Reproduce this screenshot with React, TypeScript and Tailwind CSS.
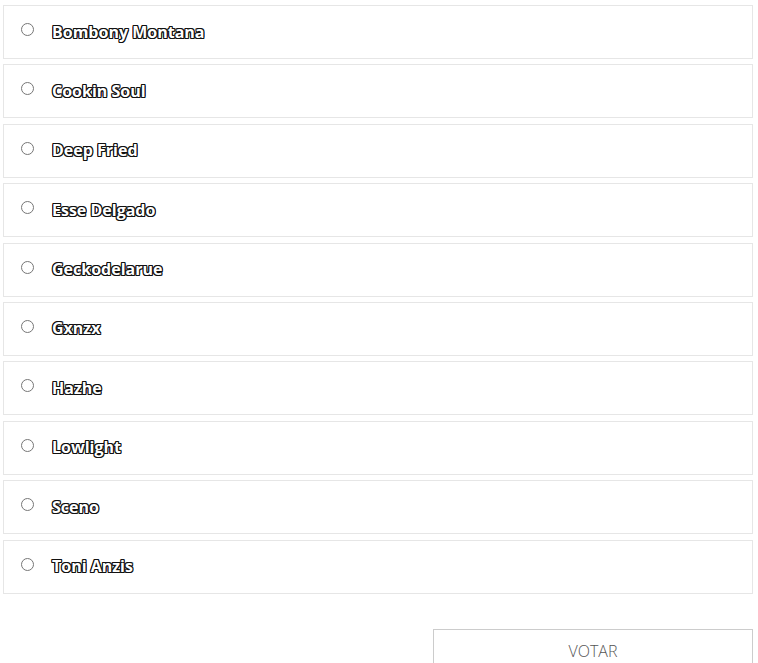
import React from 'react';

const options = [
    'Bombony Montana',
    'Cookin Soul',
    'Deep Fried',
    'Esse Delgado',
    'Geckodelarue',
    'Gxnzx',
    'Hazhe',
    'Lowlight',
    'Sceno',
    'Toni Anzis',
];

export default function App() {
    return (
        <div className="bg-white min-h-[663px] pl-[3px] pt-[5px] font-['Open_Sans',sans-serif]">
            <div className="w-[750px] flex flex-col gap-[5.4px]">
                {options.map((name) => (
                    <label
                        key={name}
                        className="h-[54px] border border-[#e6e6e6] flex items-center pl-[17px] pb-[1px]"
                    >
                        <input type="radio" name="voto" className="w-[13px] h-[13px] m-0 mr-[18px] accent-gray-500 -mt-[4px]" />
                        <span className="text-[16px] font-bold text-white [text-shadow:1px_1px_0_#111,-1px_-1px_0_#111,1px_-1px_0_#111,-1px_1px_0_#111,0_1px_0_#111,0_-1px_0_#111,1px_0_0_#111,-1px_0_0_#111]">
                            {name}
                        </span>
                    </label>
                ))}
            </div>
            <div className="w-[750px] flex justify-end mt-[35px]">
                <button className="w-[320px] h-[44px] border border-[#cccccc] bg-white text-[#555] text-[16px] font-light">
                    VOTAR
                </button>
            </div>
        </div>
    );
}
